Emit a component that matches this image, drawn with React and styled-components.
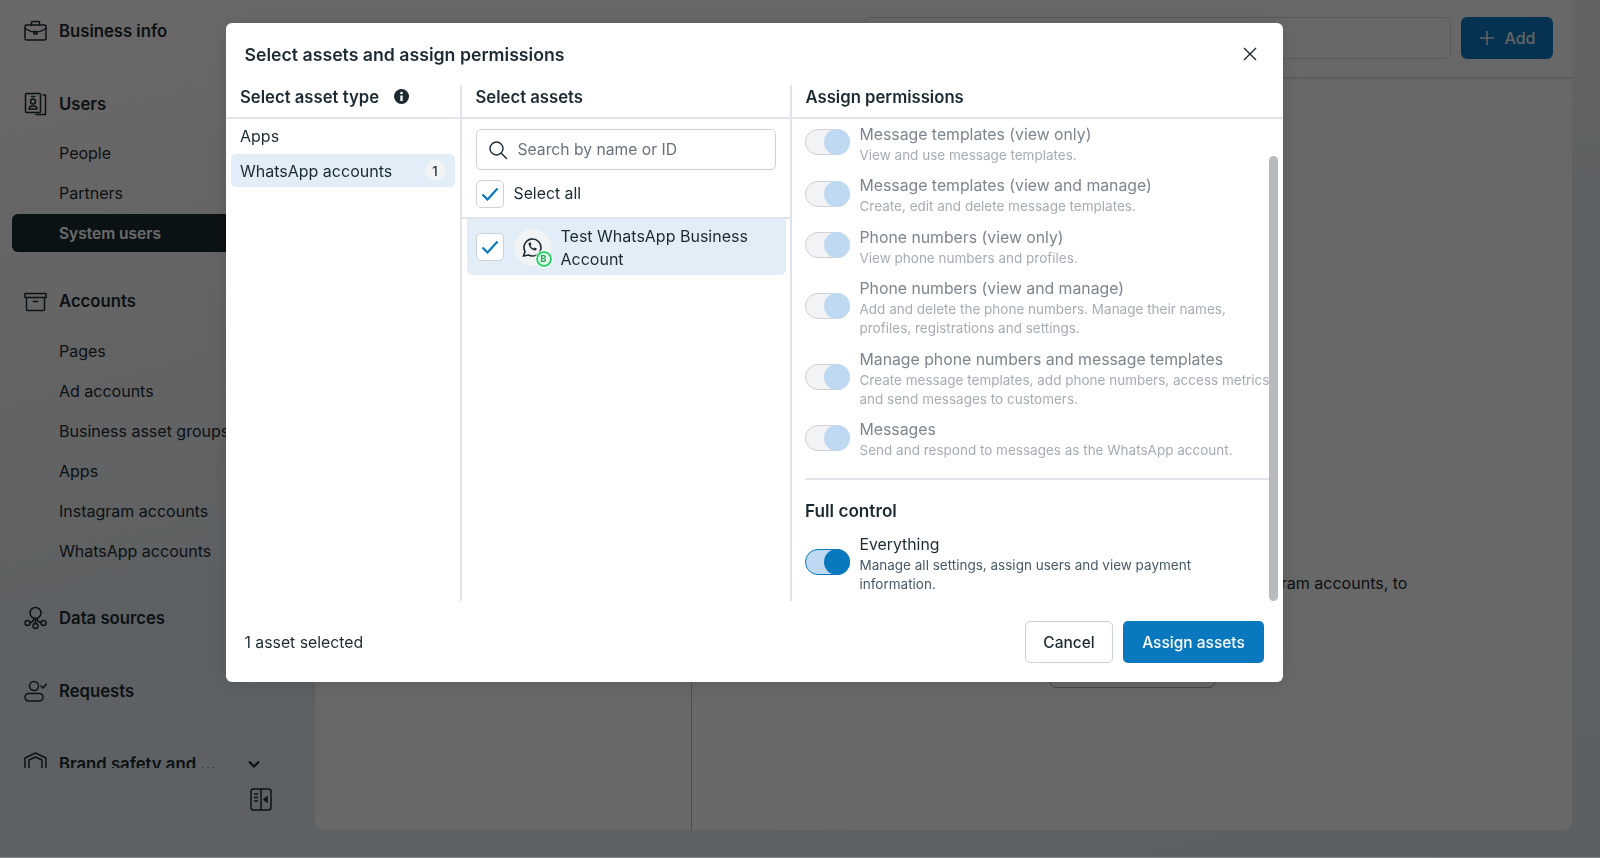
import styled, { createGlobalStyle } from 'styled-components';

const GlobalStyle = createGlobalStyle`
  html, body {
    margin: 0;
    height: 100%;
    overflow: hidden;
    font-family: Inter, "Liberation Sans", sans-serif;
    color: #1c2b33;
  }
  * { box-sizing: border-box; }
`;

const Page = styled.div`
  display: grid;
  grid-template-columns: 315px 1257px 28px;
  height: 858px;
  background: linear-gradient(165deg, #fff8f8 0%, #eeeef0 30%, #dfe7ec 50%, #dbe5ec 100%);
`;

const Sidebar = styled.aside`
  display: flex;
  flex-direction: column;
  height: 830px;
`;

const SideNav = styled.nav`
  height: 768px;
  overflow: hidden;
  padding: 11px 0 0 12px;
`;

const Section = styled.div`
  margin-bottom: ${p => p.$gap || 33}px;
`;

const SectionHead = styled.div`
  display: flex;
  align-items: center;
  height: 40px;
  width: 248px;
  padding-left: 12px;
  font-size: 16.7px;
  font-weight: 600;
  gap: 12px;
  white-space: nowrap;
`;

const HeadIcon = styled.svg`
  width: 23px;
  height: 24px;
  flex: none;
  fill: none;
  stroke: #1c2b33;
  stroke-width: 1.5;
  stroke-linecap: round;
  stroke-linejoin: round;
`;

const Chevron = styled.svg`
  margin-left: auto;
  flex: none;
  fill: none;
  stroke: #1c2b33;
  stroke-width: 2.2;
`;

const SubList = styled.div`
  margin: ${p => p.$top || 9}px 0 -5px;
`;

const SubItem = styled.div`
  display: flex;
  align-items: center;
  height: 40px;
  padding-left: 47px;
  font-size: 16px;
  white-space: nowrap;
`;

const ActiveSubItem = styled(SubItem)`
  height: 38px;
  margin: 1px 0;
  border-radius: 6px;
  background: #1c2b33;
  color: #fff;
  font-size: 15.5px;
  font-weight: 600;
`;

const CollapseRow = styled.div`
  display: flex;
  justify-content: flex-end;
  padding: 20px 43px 0 0;
`;

const Main = styled.main`
  height: 830px;
  border-radius: 0 0 8px 8px;
  background: #f7f7f7;
  display: flex;
  flex-direction: column;
`;

const TopBar = styled.div`
  display: flex;
  justify-content: flex-end;
  gap: 10px;
  height: 79px;
  padding: 17px 19px 0 0;
  border-bottom: 2px solid #dcdee0;
`;

const FakeSearch = styled.div`
  width: 587px;
  height: 42px;
  border: 1.5px solid #d4d6d9;
  border-radius: 6px;
`;

const AddButton = styled.div`
  width: 92px;
  height: 42px;
  border-radius: 6px;
  background: #0a78be;
  color: #eee;
  font-size: 16px;
  font-weight: 500;
  display: flex;
  align-items: center;
  justify-content: center;
  gap: 10px;
`;

const MainBody = styled.div`
  flex: 1;
  display: grid;
  grid-template-columns: 377px 1fr;
`;

const EmptyPane = styled.div`
  border-right: 1px solid #b8bbbe;
`;

const DetailPane = styled.div`
  display: flex;
  flex-direction: column;
  align-items: center;
  padding-top: 493px;
`;

const DetailText = styled.p`
  margin: 0 0 53px;
  font-size: 16px;
  line-height: 22px;
  text-align: center;
  white-space: nowrap;
`;

const GhostButton = styled.div`
  width: 165px;
  height: 41px;
  border: 1.5px solid #a4a6a9;
  border-radius: 6px;
`;

const Overlay = styled.div`
  position: fixed;
  inset: 0;
  background: rgba(0, 0, 0, 0.58);
  border-bottom: 1px solid #8b8e8e;
`;

const Modal = styled.div`
  position: fixed;
  left: 225.5px;
  top: 23px;
  width: 1057.5px;
  height: 659px;
  background: #fff;
  border-radius: 6px;
  box-shadow: 0 2px 24px rgba(0, 0, 0, 0.12);
  display: flex;
  flex-direction: column;
`;

const ModalHeader = styled.div`
  display: flex;
  align-items: center;
  justify-content: space-between;
  height: 62px;
  padding: 0 25px 0 19px;
`;

const ModalTitle = styled.h2`
  margin: 0;
  font-size: 17.7px;
  font-weight: 600;
`;

const CloseIcon = styled.svg`
  width: 16px;
  height: 16px;
  stroke: #1c2b33;
  stroke-width: 1.4;
  fill: none;
`;

const Columns = styled.div`
  display: grid;
  grid-template-columns: 236px 330px 1fr;
  grid-template-rows: 516px;
`;

const Column = styled.section`
  display: flex;
  flex-direction: column;
  min-width: 0;
  min-height: 0;
  border-right: ${p => (p.$last ? 'none' : '2px solid #dfe4ea')};
`;

const ColumnHead = styled.div`
  display: flex;
  align-items: center;
  gap: 15px;
  flex: none;
  height: 34px;
  padding: 0 0 9px ${p => p.$pad}px;
  border-bottom: 2px solid #dfe4ea;
  font-size: 16.7px;
  font-weight: 600;
  margin-right: ${p => (p.$last ? 0 : -2)}px;
`;

const TypeList = styled.div`
  padding: 0 5px;
  display: flex;
  flex-direction: column;
  gap: 2px;
`;

const TypeRow = styled.div`
  display: flex;
  align-items: center;
  justify-content: space-between;
  height: 33px;
  padding: 0 9px 0 9.5px;
  border-radius: 5px;
  font-size: 16px;
  background: ${p => (p.$active ? '#e1edf7' : 'transparent')};
`;

const CountBadge = styled.span`
  width: 21px;
  height: 21px;
  border-radius: 50%;
  background: #f1f3f5;
  font-size: 13px;
  font-weight: 500;
  display: flex;
  align-items: center;
  justify-content: center;
`;

const SearchBox = styled.div`
  display: flex;
  align-items: center;
  gap: 10px;
  height: 41px;
  margin: 10px 14px 0 14px;
  padding-left: 11px;
  border: 1px solid #cbd2d9;
  border-radius: 5px;
  font-size: 15.7px;
  color: #67727c;
`;

const SearchIcon = styled.svg`
  width: 20px;
  height: 20px;
  fill: none;
  stroke: #1c2b33;
  stroke-width: 1.4;
  stroke-linecap: round;
`;

const SelectAll = styled.div`
  display: flex;
  align-items: center;
  gap: 10px;
  height: 49px;
  padding: 0 0 0 14px;
  margin-right: -2px;
  border-bottom: 2px solid #dfe4ea;
  font-size: 15.8px;
`;

const Checkbox = styled.span`
  flex: none;
  width: 28px;
  height: 28px;
  border: 1px solid #cbd2d9;
  border-radius: 5px;
  background: #fff;
  display: flex;
  align-items: center;
  justify-content: center;
  svg {
    width: 18px;
    height: 14px;
    fill: none;
    stroke: #0a78be;
    stroke-width: 2.2;
  }
`;

const AssetRow = styled.div`
  display: flex;
  align-items: center;
  height: 56px;
  margin: 0 4px 0 5px;
  padding-left: 9px;
  border-radius: 0 0 5px 5px;
  background: #e1edf7;
`;

const Avatar = styled.span`
  position: relative;
  flex: none;
  width: 37px;
  height: 37px;
  margin: 0 10px;
  border-radius: 50%;
  background: #f1f3f5;
  display: flex;
  align-items: center;
  justify-content: center;
`;

const BizBadge = styled.span`
  position: absolute;
  right: -1px;
  bottom: -1px;
  width: 16px;
  height: 16px;
  border: 2px solid #25d366;
  border-radius: 50%;
  outline: 1.5px solid #fff;
  background: #e8f8ee;
  color: #1faa55;
  font-size: 9.5px;
  font-weight: 700;
  display: flex;
  align-items: center;
  justify-content: center;
`;

const AssetName = styled.span`
  padding-top: 2px;
  font-size: 16px;
  line-height: 23px;
`;

const PermScroll = styled.div`
  position: relative;
  flex: 1;
  overflow: hidden;
  padding: 4.5px 14px 0 13.5px;
`;

const ScrollThumb = styled.div`
  position: absolute;
  right: 5px;
  top: 37px;
  bottom: 0;
  width: 9px;
  border-radius: 5px;
  background: #b8bbbe;
`;

const PermRow = styled.div`
  display: flex;
  align-items: center;
  gap: 9.5px;
  margin-bottom: 10.6px;
`;

const Toggle = styled.span`
  position: relative;
  flex: none;
  width: 45px;
  height: 26px;
  margin-top: -4px;
  border-radius: 13px;
  border: 1px solid ${p => (p.$on ? '#0a78be' : '#ccd0d5')};
  background: ${p => (p.$on ? '#c0d9f3' : '#f1f3f5')};
  &::after {
    content: '';
    position: absolute;
    right: -1px;
    top: -1px;
    width: 26px;
    height: 26px;
    border-radius: 50%;
    background: ${p => (p.$on ? '#0a78be' : '#c0d9f3')};
  }
`;

const PermText = styled.div`
  min-width: 0;
  flex: 1;
  margin-right: ${p => (p.$on ? 20 : -4)}px;
`;

const PermTitle = styled.div`
  font-size: 15.8px;
  line-height: 22px;
  color: ${p => (p.$on ? '#1c2b33' : '#7c868e')};
`;

const PermDesc = styled.div`
  font-size: 13.5px;
  line-height: 19px;
  color: ${p => (p.$on ? '#465a69' : '#a5adb4')};
`;

const PermDivider = styled.hr`
  margin: 17.5px 0 20px;
  border: none;
  border-top: 2px solid #dfe4ea;
`;

const SubHeading = styled.div`
  font-size: 17.2px;
  font-weight: 600;
  line-height: 22px;
  margin-bottom: 12px;
`;

const ModalFooter = styled.div`
  flex: 1;
  display: flex;
  align-items: center;
  justify-content: space-between;
  padding: 0 19px;
  font-size: 15.8px;
`;

const SelectedCount = styled.span`
  padding-top: 2px;
`;

const FooterActions = styled.div`
  display: flex;
  gap: 10px;
`;

const Button = styled.button`
  height: 42px;
  width: ${p => (p.$primary ? 141 : 88)}px;
  padding: 2px 0 0;
  border-radius: 5px;
  border: ${p => (p.$primary ? 'none' : '1.5px solid #cbd2d9')};
  background: ${p => (p.$primary ? '#0a78be' : '#fff')};
  color: ${p => (p.$primary ? '#fff' : '#1c2b33')};
  font: 500 15.5px Inter, "Liberation Sans", sans-serif;
`;

const sections = [
  {
    name: 'Business info',
    icon: (
      <>
        <rect x="1" y="6" width="21" height="15" rx="1.5" />
        <path d="M7.5 6V3.5a1 1 0 0 1 1-1h6a1 1 0 0 1 1 1V6M1 9.5c3 2 7 3.5 10.5 3.5S19 11.5 22 9.5" />
        <path d="M10 12.5h3v2.5h-3z" />
      </>
    ),
  },
  {
    name: 'Users',
    items: ['People', 'Partners', 'System users'],
    active: 'System users',
    gap: 34,
    icon: (
      <>
        <rect x="1.5" y="1.5" width="15" height="19" rx="1" />
        <circle cx="9" cy="9.5" r="2.5" />
        <path d="M5 17c0-2 1.5-3 4-3s4 1 4 3zM7.5 4.5h3M19 3h2.5v19.5H12" />
      </>
    ),
  },
  {
    name: 'Accounts',
    items: ['Pages', 'Ad accounts', 'Business asset groups', 'Apps', 'Instagram accounts', 'WhatsApp accounts'],
    listTop: 10,
    gap: 32,
    icon: <path d="M1 4.5h21v4H1zM2.5 8.5v12a1 1 0 0 0 1 1h16a1 1 0 0 0 1-1v-12M9.5 12.5h4" />,
  },
  {
    name: 'Data sources',
    gap: 33,
    icon: (
      <>
        <circle cx="11.5" cy="7" r="5.5" />
        <circle cx="3.5" cy="17" r="2.5" />
        <circle cx="11.5" cy="20" r="2.5" />
        <circle cx="19.5" cy="17" r="2.5" />
        <path d="M6 16.5c2 0 3.5-1.5 4-4M17 16.5c-2 0-3.5-1.5-4-4M11.5 12.5v5" />
      </>
    ),
  },
  {
    name: 'Requests',
    gap: 33,
    icon: (
      <>
        <circle cx="10" cy="7" r="4.5" />
        <rect x="1" y="14.5" width="18" height="7.5" rx="3.75" />
        <path d="M17 7l2 2 3.5-4" />
      </>
    ),
  },
  {
    name: 'Brand safety and ...',
    chevron: true,
    icon: (
      <>
        <path d="M11.5 1L22 6v8c0 5-4 8-10.5 10C5 22 1 19 1 14V6z" />
        <path d="M11.5 5L18 8v6c0 3-2.500 5-6.500 6.500C7.500 19 5 17 5 14V8z" />
      </>
    ),
  },
];

const permissions = [
  { title: 'Message templates (view only)', desc: 'View and use message templates.' },
  { title: 'Message templates (view and manage)', desc: 'Create, edit and delete message templates.' },
  { title: 'Phone numbers (view only)', desc: 'View phone numbers and profiles.' },
  {
    title: 'Phone numbers (view and manage)',
    desc: 'Add and delete the phone numbers. Manage their names, profiles, registrations and settings.',
  },
  {
    title: 'Manage phone numbers and message templates',
    desc: 'Create message templates, add phone numbers, access metrics and send messages to customers.',
  },
  { title: 'Messages', desc: 'Send and respond to messages as the WhatsApp account.' },
];

const Check = () => (
  <Checkbox>
    <svg viewBox="0 0 18 14">
      <path d="M1.500 7.500l5 5L16.500 1.500" />
    </svg>
  </Checkbox>
);

const Permission = ({ title, desc, on }) => (
  <PermRow>
    <Toggle $on={on} />
    <PermText $on={on}>
      <PermTitle $on={on}>{title}</PermTitle>
      <PermDesc $on={on}>{desc}</PermDesc>
    </PermText>
  </PermRow>
);

const App = () => {
  return (
    <>
      <GlobalStyle />
      <Page>
        <Sidebar>
          <SideNav>
            {sections.map(s => (
              <Section key={s.name} $gap={s.gap}>
                <SectionHead>
                  <HeadIcon viewBox="0 0 23 24">{s.icon}</HeadIcon>
                  {s.name}
                  {s.chevron && (
                    <Chevron width="12" height="8" viewBox="0 0 12 8">
                      <path d="M1 1.500l5 5 5-5" />
                    </Chevron>
                  )}
                </SectionHead>
                {s.items && (
                  <SubList $top={s.listTop}>
                    {s.items.map(item =>
                      item === s.active ? (
                        <ActiveSubItem key={item}>{item}</ActiveSubItem>
                      ) : (
                        <SubItem key={item}>{item}</SubItem>
                      ),
                    )}
                  </SubList>
                )}
              </Section>
            ))}
          </SideNav>
          <CollapseRow>
            <svg width="22" height="23" viewBox="0 0 22 23" fill="none" stroke="#1c2b33" strokeWidth="1.5">
              <rect x="1" y="1" width="20" height="21" rx="2.500" />
              <path d="M11 1v21M4 6h4M4 9.500h4M4 13h4" />
              <path d="M17 9v5l-3-2.500z" fill="#1c2b33" />
            </svg>
          </CollapseRow>
        </Sidebar>

        <Main>
          <TopBar>
            <FakeSearch />
            <AddButton>
              <svg width="16" height="16" viewBox="0 0 16 16" stroke="#eee" strokeWidth="1.5">
                <path d="M8 1v14M1 8h14" />
              </svg>
              Add
            </AddButton>
          </TopBar>
          <MainBody>
            <EmptyPane />
            <DetailPane>
              <DetailText>Connect your system users with apps, Pages and Instagram accounts, to</DetailText>
              <GhostButton />
            </DetailPane>
          </MainBody>
        </Main>
      </Page>

      <Overlay />

      <Modal>
        <ModalHeader>
          <ModalTitle>Select assets and assign permissions</ModalTitle>
          <CloseIcon viewBox="0 0 16 16">
            <path d="M2 2l12 12M14 2L2 14" />
          </CloseIcon>
        </ModalHeader>

        <Columns>
          <Column>
            <ColumnHead $pad={14.5}>
              Select asset type
              <svg width="15" height="15" viewBox="0 0 15 15">
                <circle cx="7.500" cy="7.500" r="7.500" fill="#1c2b33" />
                <circle cx="7.500" cy="4" r="1.300" fill="#fff" />
                <path d="M6.300 6.500h2.400v5.500H6.300z" fill="#fff" />
              </svg>
            </ColumnHead>
            <TypeList>
              <TypeRow>Apps</TypeRow>
              <TypeRow $active>
                WhatsApp accounts
                <CountBadge>1</CountBadge>
              </TypeRow>
            </TypeList>
          </Column>

          <Column>
            <ColumnHead $pad={14}>Select assets</ColumnHead>
            <SearchBox>
              <SearchIcon viewBox="0 0 20 20">
                <circle cx="8.500" cy="8.500" r="6.500" />
                <path d="M13.500 13.500l5 5" />
              </SearchIcon>
              Search by name or ID
            </SearchBox>
            <SelectAll>
              <Check />
              Select all
            </SelectAll>
            <AssetRow>
              <Check />
              <Avatar>
                <svg width="22" height="22" viewBox="0 0 22 22" fill="none" stroke="#1c2b33" strokeWidth="1.600">
                  <path d="M2.500 20l1.500-4.500A8.500 8.500 0 1 1 7.500 19z" />
                  <path
                    d="M7.500 7c0 4 3.500 7.500 7.500 7.500l.8-2-2.300-1-1 1c-1.500-.7-2.500-1.700-3-3l1-1-1-2.300z"
                    fill="#1c2b33"
                    stroke="none"
                  />
                </svg>
                <BizBadge>B</BizBadge>
              </Avatar>
              <AssetName>Test WhatsApp Business Account</AssetName>
            </AssetRow>
          </Column>

          <Column $last>
            <ColumnHead $pad={14} $last>
              Assign permissions
            </ColumnHead>
            <PermScroll>
              {permissions.map(p => (
                <Permission key={p.title} title={p.title} desc={p.desc} />
              ))}
              <PermDivider />
              <SubHeading>Full control</SubHeading>
              <Permission
                on
                title="Everything"
                desc="Manage all settings, assign users and view payment information."
              />
              <ScrollThumb />
            </PermScroll>
          </Column>
        </Columns>

        <ModalFooter>
          <SelectedCount>1 asset selected</SelectedCount>
          <FooterActions>
            <Button>Cancel</Button>
            <Button $primary>Assign assets</Button>
          </FooterActions>
        </ModalFooter>
      </Modal>
    </>
  );
};

export default App;
